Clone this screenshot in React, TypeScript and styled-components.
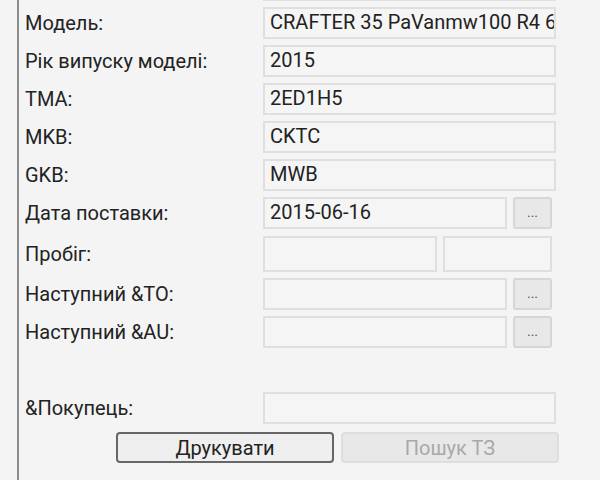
import styled, { createGlobalStyle } from 'styled-components';

const GlobalStyle = createGlobalStyle`
  html, body {
    margin: 0;
    padding: 0;
    background: #f4f4f4;
    font-family: Roboto, "Noto Sans", "Liberation Sans", sans-serif;
  }
`;

interface FieldRow {
  label: string;
  value?: string;
  picker?: boolean;
  split?: boolean;
}

const rows: FieldRow[] = [
  { label: 'Модель:', value: 'CRAFTER 35 PaVanmw100 R4 6' },
  { label: 'Рік випуску моделі:', value: '2015' },
  { label: 'TMA:', value: '2ED1H5' },
  { label: 'MKB:', value: 'CKTC' },
  { label: 'GKB:', value: 'MWB' },
  { label: 'Дата поставки:', value: '2015-06-16', picker: true },
  { label: 'Пробіг:', split: true },
  { label: 'Наступний &TO:', picker: true },
  { label: 'Наступний &AU:', picker: true },
];

export default function App() {
  return (
    <>
      <GlobalStyle />
      <Page>
        <Panel>
          <Row>
            <Label />
            <Input />
          </Row>
          {rows.map((r) => (
            <Row key={r.label} $tall={r.split}>
              <Label>{r.label}</Label>
              {r.split ? (
                <Fields>
                  <Input $width="174px" />
                  <Input $width="109px" />
                </Fields>
              ) : r.picker ? (
                <Fields>
                  <Input $width="244px">{r.value}</Input>
                  <PickButton>...</PickButton>
                </Fields>
              ) : (
                <Input>{r.value}</Input>
              )}
            </Row>
          ))}
          <Row $spaced>
            <Label>&amp;Покупець:</Label>
            <Input />
          </Row>
          <Actions>
            <Button>Друкувати</Button>
            <Button disabled>Пошук ТЗ</Button>
          </Actions>
        </Panel>
      </Page>
    </>
  );
}

// styled-components
const Page = styled.div`
  width: 600px;
  height: 480px;
  overflow: hidden;
  padding-left: 17px;
  box-sizing: border-box;
  background: #f4f4f4;
`;

const Panel = styled.div`
  min-height: calc(100% + 31px);
  box-sizing: border-box;
  border-left: 2px solid #8c8c8c;
  padding-left: 6px;
  margin-top: -31px;
  display: flex;
  flex-direction: column;
  gap: 6px;
`;

const Row = styled.div<{ $tall?: boolean; $spaced?: boolean }>`
  display: flex;
  flex-shrink: 0;
  align-items: center;
  height: ${(p) => (p.$tall ? '36px' : '32px')};
  margin-top: ${(p) => (p.$spaced ? '38px' : p.$tall ? '1px' : '0')};
`;

const Label = styled.div`
  width: 238px;
  flex-shrink: 0;
  font-size: 20px;
  color: #222;
  white-space: nowrap;
`;

const Fields = styled.div`
  display: flex;
  gap: 6px;
  height: 100%;
  align-items: center;
`;

const Input = styled.div<{ $width?: string }>`
  width: ${(p) => p.$width || '293px'};
  height: 100%;
  flex-shrink: 0;
  box-sizing: border-box;
  border: 2px solid #dfdfdf;
  background: #f5f5f5;
  padding: 0 5px;
  font-size: 20px;
  line-height: 26px;
  color: #222;
  white-space: nowrap;
  overflow: hidden;
`;

const PickButton = styled.div`
  width: 39px;
  height: 32px;
  flex-shrink: 0;
  box-sizing: border-box;
  border: 2px solid #d6d6d6;
  border-radius: 3px;
  background: #e8e8e8;
  display: flex;
  align-items: center;
  justify-content: center;
  font-size: 14px;
  color: #555;
  padding-bottom: 2px;
`;

const Actions = styled.div`
  display: flex;
  flex-shrink: 0;
  gap: 7px;
  padding-left: 91px;
  margin-top: 2px;
`;

const Button = styled.button`
  width: 218px;
  height: 31px;
  box-sizing: border-box;
  border: 2px solid ${(p) => (p.disabled ? '#dedede' : '#666')};
  border-radius: 4px;
  background: ${(p) => (p.disabled ? '#e8e8e8' : '#efefef')};
  color: ${(p) => (p.disabled ? '#a9a9a9' : '#222')};
  font-family: Roboto, "Noto Sans", "Liberation Sans", sans-serif;
  font-size: 20px;
  padding: 0;
`;
